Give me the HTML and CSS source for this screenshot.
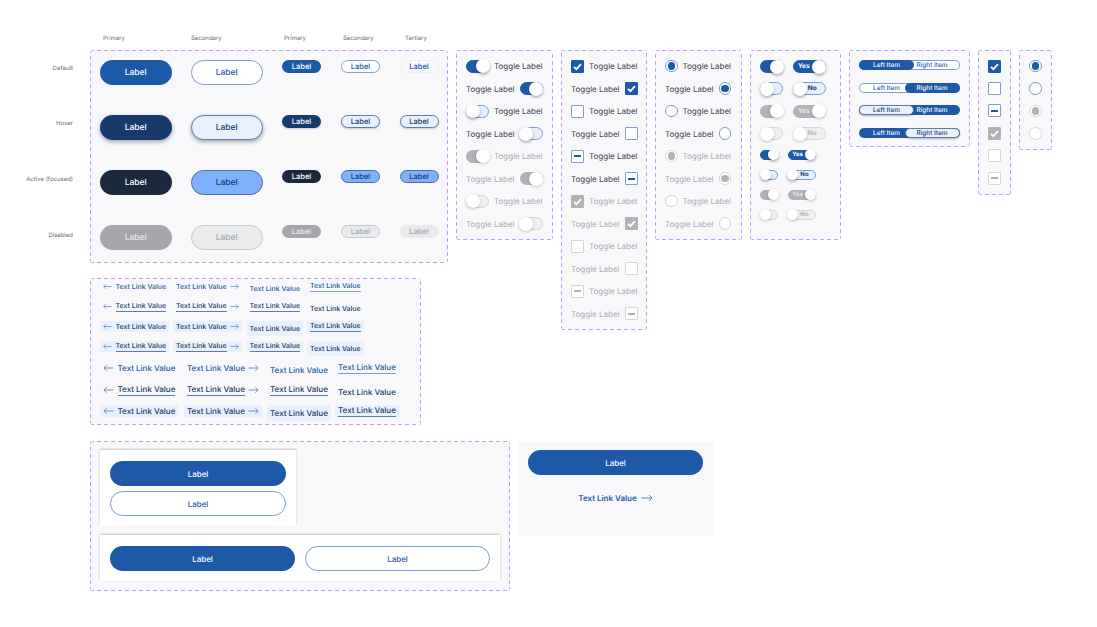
FILE: index.html
```html
<!DOCTYPE html>
<html lang="en">

<head>
    <meta charset="UTF-8" />
    <title>Buttons and Controls</title>
    <link rel="stylesheet" href="styles.css">
</head>

<body>
    <svg class="defs" width="0" height="0">
        <symbol id="check" viewBox="0 0 13 13">
            <path d="M3 6.8 5.4 9.2 10 4.2" fill="none" stroke="currentColor" stroke-width="1.7" />
        </symbol>
        <symbol id="arrow-right" viewBox="0 0 12 8">
            <path d="M0.5 4H11M8 1l3 3-3 3" fill="none" stroke="currentColor" stroke-width="0.9" />
        </symbol>
        <symbol id="arrow-left" viewBox="0 0 12 8">
            <path d="M11.5 4H1M4 1 1 4l3 3" fill="none" stroke="currentColor" stroke-width="0.9" />
        </symbol>
    </svg>

    <div class="col-heads">
        <span class="col-head w-88">Primary</span>
        <span class="col-head w-93">Secondary</span>
        <span class="col-head w-59">Primary</span>
        <span class="col-head w-62">Secondary</span>
        <span class="col-head">Tertiary</span>
    </div>

    <div class="upper">
        <div class="states">
            <span class="state">Default</span>
            <span class="state">Hover</span>
            <span class="state">Active (focused)</span>
            <span class="state">Disabled</span>
        </div>

        <div class="left-stack">
            <!-- Buttons -->
            <section class="panel matrix">
                <a class="btn big primary">Label</a>
                <a class="btn big secondary">Label</a>
                <a class="btn small primary">Label</a>
                <a class="btn small secondary">Label</a>
                <a class="btn small tertiary">Label</a>

                <a class="btn big primary hover">Label</a>
                <a class="btn big secondary hover">Label</a>
                <a class="btn small primary hover-flat">Label</a>
                <a class="btn small secondary hover-flat">Label</a>
                <a class="btn small tertiary hover-flat">Label</a>

                <a class="btn big primary active">Label</a>
                <a class="btn big secondary active">Label</a>
                <a class="btn small primary active">Label</a>
                <a class="btn small secondary active">Label</a>
                <a class="btn small tertiary active">Label</a>

                <a class="btn big primary disabled">Label</a>
                <a class="btn big secondary disabled">Label</a>
                <a class="btn small primary disabled">Label</a>
                <a class="btn small secondary disabled">Label</a>
                <a class="btn small tertiary disabled">Label</a>
            </section>

            <!-- Text links -->
            <section class="panel links">
                <div class="link-grid small-links">
                    <a class="link"><svg class="arrow"><use href="#arrow-left" /></svg><span>Text Link Value</span></a>
                    <a class="link"><span>Text Link Value</span><svg class="arrow"><use href="#arrow-right" /></svg></a>
                    <a class="link plain"><span>Text Link Value</span></a>
                    <a class="link"><span class="line">Text Link Value</span></a>

                    <a class="link dark"><svg class="arrow"><use href="#arrow-left" /></svg><span class="line">Text Link Value</span></a>
                    <a class="link dark"><span class="line">Text Link Value</span><svg class="arrow"><use href="#arrow-right" /></svg></a>
                    <a class="link dark"><span class="line">Text Link Value</span></a>
                    <a class="link dark plain"><span>Text Link Value</span></a>

                    <a class="link dark tint"><svg class="arrow"><use href="#arrow-left" /></svg><span>Text Link Value</span></a>
                    <a class="link dark tint"><span>Text Link Value</span><svg class="arrow"><use href="#arrow-right" /></svg></a>
                    <a class="link dark tint plain"><span>Text Link Value</span></a>
                    <a class="link dark tint"><span class="line">Text Link Value</span></a>

                    <a class="link dark tint"><svg class="arrow"><use href="#arrow-left" /></svg><span class="line">Text Link Value</span></a>
                    <a class="link dark tint"><span class="line">Text Link Value</span><svg class="arrow"><use href="#arrow-right" /></svg></a>
                    <a class="link dark tint"><span class="line">Text Link Value</span></a>
                    <a class="link dark tint plain"><span>Text Link Value</span></a>
                </div>
                <div class="link-grid big-links">
                    <a class="link"><svg class="arrow"><use href="#arrow-left" /></svg><span>Text Link Value</span></a>
                    <a class="link"><span>Text Link Value</span><svg class="arrow"><use href="#arrow-right" /></svg></a>
                    <a class="link plain"><span>Text Link Value</span></a>
                    <a class="link"><span class="line">Text Link Value</span></a>

                    <a class="link dark"><svg class="arrow"><use href="#arrow-left" /></svg><span class="line">Text Link Value</span></a>
                    <a class="link dark"><span class="line">Text Link Value</span><svg class="arrow"><use href="#arrow-right" /></svg></a>
                    <a class="link dark"><span class="line">Text Link Value</span></a>
                    <a class="link dark plain"><span>Text Link Value</span></a>

                    <a class="link dark tint"><svg class="arrow"><use href="#arrow-left" /></svg><span>Text Link Value</span></a>
                    <a class="link dark tint"><span>Text Link Value</span><svg class="arrow"><use href="#arrow-right" /></svg></a>
                    <a class="link dark tint plain"><span>Text Link Value</span></a>
                    <a class="link dark tint"><span class="line">Text Link Value</span></a>
                </div>
            </section>
        </div>

        <!-- Toggles with labels -->
        <section class="panel list w-97">
            <div class="row"><span class="switch on"><i class="knob"></i></span><span class="text">Toggle Label</span></div>
            <div class="row"><span class="text">Toggle Label</span><span class="switch on"><i class="knob"></i></span></div>
            <div class="row"><span class="switch off"><i class="knob"></i></span><span class="text">Toggle Label</span></div>
            <div class="row"><span class="text">Toggle Label</span><span class="switch off"><i class="knob"></i></span></div>
            <div class="row muted"><span class="switch on"><i class="knob"></i></span><span class="text">Toggle Label</span></div>
            <div class="row muted"><span class="text">Toggle Label</span><span class="switch on"><i class="knob"></i></span></div>
            <div class="row muted"><span class="switch off"><i class="knob"></i></span><span class="text">Toggle Label</span></div>
            <div class="row muted"><span class="text">Toggle Label</span><span class="switch off"><i class="knob"></i></span></div>
        </section>

        <!-- Checkboxes with labels -->
        <section class="panel list w-86 tall">
            <div class="row"><span class="box filled"><svg><use href="#check" /></svg></span><span class="text">Toggle Label</span></div>
            <div class="row"><span class="text">Toggle Label</span><span class="box filled"><svg><use href="#check" /></svg></span></div>
            <div class="row"><span class="box"></span><span class="text">Toggle Label</span></div>
            <div class="row"><span class="text">Toggle Label</span><span class="box"></span></div>
            <div class="row"><span class="box"><i class="dash"></i></span><span class="text">Toggle Label</span></div>
            <div class="row"><span class="text">Toggle Label</span><span class="box"><i class="dash"></i></span></div>
            <div class="row muted"><span class="box filled"><svg><use href="#check" /></svg></span><span class="text">Toggle Label</span></div>
            <div class="row muted"><span class="text">Toggle Label</span><span class="box filled"><svg><use href="#check" /></svg></span></div>
            <div class="row muted"><span class="box"></span><span class="text">Toggle Label</span></div>
            <div class="row muted"><span class="text">Toggle Label</span><span class="box"></span></div>
            <div class="row muted"><span class="box"><i class="dash"></i></span><span class="text">Toggle Label</span></div>
            <div class="row muted"><span class="text">Toggle Label</span><span class="box"><i class="dash"></i></span></div>
        </section>

        <!-- Radios with labels -->
        <section class="panel list w-87">
            <div class="row"><span class="radio"><i class="dot"></i></span><span class="text">Toggle Label</span></div>
            <div class="row"><span class="text">Toggle Label</span><span class="radio"><i class="dot"></i></span></div>
            <div class="row"><span class="radio"></span><span class="text">Toggle Label</span></div>
            <div class="row"><span class="text">Toggle Label</span><span class="radio"></span></div>
            <div class="row muted"><span class="radio"><i class="dot"></i></span><span class="text">Toggle Label</span></div>
            <div class="row muted"><span class="text">Toggle Label</span><span class="radio"><i class="dot"></i></span></div>
            <div class="row muted"><span class="radio"></span><span class="text">Toggle Label</span></div>
            <div class="row muted"><span class="text">Toggle Label</span><span class="radio"></span></div>
        </section>

        <!-- Bare toggles -->
        <section class="panel bare-toggles">
            <div class="toggle-pair"><span class="switch on"><i class="knob"></i></span><span class="switch wide on"><b>Yes</b><i class="knob"></i></span></div>
            <div class="toggle-pair"><span class="switch off"><i class="knob"></i></span><span class="switch wide off"><i class="knob"></i><b>No</b></span></div>
            <div class="toggle-pair muted"><span class="switch on"><i class="knob"></i></span><span class="switch wide on"><b>Yes</b><i class="knob"></i></span></div>
            <div class="toggle-pair muted"><span class="switch off"><i class="knob"></i></span><span class="switch wide off"><i class="knob"></i><b>No</b></span></div>
            <div class="toggle-pair mini"><span class="switch on"><i class="knob"></i></span><span class="switch wide on"><b>Yes</b><i class="knob"></i></span></div>
            <div class="toggle-pair mini"><span class="switch off"><i class="knob"></i></span><span class="switch wide off"><i class="knob"></i><b>No</b></span></div>
            <div class="toggle-pair mini muted"><span class="switch on"><i class="knob"></i></span><span class="switch wide on"><b>Yes</b><i class="knob"></i></span></div>
            <div class="toggle-pair mini muted"><span class="switch off"><i class="knob"></i></span><span class="switch wide off"><i class="knob"></i><b>No</b></span></div>
        </section>

        <!-- Segmented -->
        <section class="panel segments">
            <div class="segment"><span class="seg-item picked">Left Item</span><span class="seg-item">Right Item</span></div>
            <div class="segment"><span class="seg-item">Left Item</span><span class="seg-item picked">Right Item</span></div>
            <div class="segment solid"><span class="seg-item pale">Left Item</span><span class="seg-item">Right Item</span></div>
            <div class="segment solid"><span class="seg-item">Left Item</span><span class="seg-item pale">Right Item</span></div>
        </section>

        <!-- Bare checkboxes -->
        <section class="panel bare h-145">
            <div class="bare-row"><span class="box filled"><svg><use href="#check" /></svg></span></div>
            <div class="bare-row"><span class="box"></span></div>
            <div class="bare-row"><span class="box"><i class="dash"></i></span></div>
            <div class="bare-row muted"><span class="box filled"><svg><use href="#check" /></svg></span></div>
            <div class="bare-row muted"><span class="box"></span></div>
            <div class="bare-row muted"><span class="box"><i class="dash"></i></span></div>
        </section>

        <!-- Bare radios -->
        <section class="panel bare h-100">
            <div class="bare-row"><span class="radio"><i class="dot"></i></span></div>
            <div class="bare-row"><span class="radio"></span></div>
            <div class="bare-row muted"><span class="radio"><i class="dot"></i></span></div>
            <div class="bare-row muted"><span class="radio"></span></div>
        </section>
    </div>

    <div class="lower">
        <section class="panel button-groups">
            <div class="card stacked">
                <a class="btn wide-btn primary">Label</a>
                <a class="btn wide-btn secondary">Label</a>
            </div>
            <div class="card side">
                <a class="btn wide-btn primary">Label</a>
                <a class="btn wide-btn secondary">Label</a>
            </div>
        </section>

        <section class="cta">
            <a class="btn wide-btn primary">Label</a>
            <a class="cta-link"><span>Text Link Value</span><svg class="arrow"><use href="#arrow-right" /></svg></a>
        </section>
    </div>
</body>

</html>
```

FILE: styles.css
```css
* {
    box-sizing: border-box;
}

body {
    margin: 0;
    width: 1097px;
    height: 627px;
    overflow: hidden;
    background-color: #fff;
    font-family: Inter, "Liberation Sans", sans-serif;
    text-rendering: geometricPrecision;
    color: #2c3440;
}

.defs {
    position: absolute;
}

.col-heads {
    display: flex;
    height: 18px;
    padding: 3px 0 0 103px;
    margin-top: 32px;
    font-size: 6px;
    line-height: 8px;
    color: #666b73;
}

.w-88 { width: 88px; }
.w-93 { width: 93px; }
.w-59 { width: 59px; }
.w-62 { width: 62px; }

.upper {
    display: flex;
    align-items: flex-start;
    gap: 8px;
    height: 375px;
}

.states {
    display: flex;
    flex-direction: column;
    width: 73px;
    margin-right: 9px;
    padding-top: 14.5px;
    text-align: right;
    font-size: 6px;
    line-height: 8px;
    color: #666b73;
    white-space: nowrap;
}

.state {
    height: 55.7px;
}

.left-stack {
    display: flex;
    flex-direction: column;
    gap: 15px;
    width: 358px;
}

/* longer dashes than a dashed border gives */
.panel {
    border: 1px solid transparent;
    border-radius: 3px;
    background:
        repeating-linear-gradient(90deg, #c69cfb 0 4px, transparent 4px 7px) top / 100% 1px no-repeat border-box,
        repeating-linear-gradient(90deg, #c69cfb 0 4px, transparent 4px 7px) bottom / 100% 1px no-repeat border-box,
        repeating-linear-gradient(0deg, #c69cfb 0 4px, transparent 4px 7px) left / 1px 100% no-repeat border-box,
        repeating-linear-gradient(0deg, #c69cfb 0 4px, transparent 4px 7px) right / 1px 100% no-repeat border-box,
        #f8f8fa;
}

/* Buttons */
.matrix {
    display: grid;
    grid-template-columns: 91px 91px 59px 58.5px 39px;
    grid-auto-rows: 25px;
    row-gap: 30px;
    height: 213px;
    padding: 9px;
}

.btn {
    display: flex;
    align-items: center;
    justify-content: center;
    border: 1px solid transparent;
    border-radius: 13px;
    font-weight: 500;
}

.big {
    width: 71.5px;
    height: 25px;
    font-size: 8.5px;
}

.small {
    width: 39px;
    height: 13px;
    font-size: 7.5px;
    border-radius: 7px;
}

.wide-btn {
    height: 25px;
    font-size: 8px;
}

.primary {
    background-color: #1e59a8;
    color: #fff;
}

.primary.hover,
.primary.hover-flat {
    background-color: #173a6b;
}

.primary.active {
    background-color: #1a2a3c;
}

.primary.disabled {
    background-color: #a5a7aa;
    color: #e8e9ea;
}

.secondary {
    background-color: #fff;
    border-color: #7c9fd3;
    color: #1e59a8;
}

.secondary.hover,
.secondary.hover-flat,
.tertiary.hover-flat {
    background-color: #e8f0fb;
    border-color: #5e7cab;
    color: #173a6b;
}

.secondary.active,
.tertiary.active {
    background-color: #7fb0fb;
    border-color: #4e6c9e;
    color: #173a6b;
}

.secondary.disabled {
    background-color: #e8eaec;
    border-color: #c6c9cc;
    color: #a5a9ad;
}

.tertiary {
    border-color: #eeeff3;
    color: #1e59a8;
}

.tertiary.disabled {
    background-color: #e8eaec;
    border-color: #e8eaec;
    color: #a5a9ad;
}

.hover {
    box-shadow: 0 2px 4px rgba(30, 40, 60, 0.4);
}

.hover-flat {
    box-shadow: 0 1px 2px rgba(30, 40, 60, 0.25);
}

/* Text links */
.links {
    width: 331px;
    height: 147px;
    padding: 2px 9px 0;
}

.link-grid {
    display: grid;
    align-items: start;
    justify-items: start;
}

.small-links {
    grid-template-columns: 73px 73.5px 60.5px 60px;
    grid-auto-rows: 20px;
    font-size: 7px;
}

.big-links {
    grid-template-columns: 84px 83px 68px 68px;
    grid-auto-rows: 21.5px;
    margin-top: 1px;
    font-size: 8px;
}

.link {
    display: flex;
    align-items: center;
    gap: 3.5px;
    padding: 0 3px;
    height: 11px;
    font-weight: 500;
    line-height: 10px;
    white-space: nowrap;
    color: #1e59a8;
}

.big-links .link {
    height: 12px;
    line-height: 11px;
}

.link.plain {
    height: 15px;
    padding-top: 1px;
}

.big-links .link.plain {
    height: 16px;
}

.link .line {
    border-bottom: 1px solid #7c9fd3;
}

.link.dark {
    color: #173a6b;
}

.link.dark .line {
    border-bottom-color: #5e7cab;
}

.link.tint {
    background-color: #e8f0fb;
}

.arrow {
    display: block;
    flex: none;
    width: 9px;
    height: 7px;
    color: #4e7dbd;
}

.big-links .arrow {
    width: 11px;
    height: 8px;
}

/* Labelled lists */
.list {
    display: flex;
    flex-direction: column;
    height: 190px;
    padding: 3.75px 9px;
}

.tall {
    height: 280px;
}

.w-97 { width: 97px; }
.w-86 { width: 86px; }
.w-87 { width: 87px; }

.row {
    display: flex;
    align-items: center;
    gap: 5px;
    flex: none;
    height: 22.5px;
    font-size: 8px;
    color: #3b4250;
    white-space: nowrap;
}

.row.muted,
.bare-row.muted {
    color: #a9adb3;
}

.switch {
    display: flex;
    align-items: center;
    flex: none;
    width: 23px;
    height: 13px;
    border: 1px solid #1e59a8;
    border-radius: 7px;
    background-color: #1e59a8;
    font-style: normal;
}

.switch.on {
    justify-content: flex-end;
}

.switch.off {
    background-color: #e8f0fb;
    border-color: #7c9fd3;
}

.knob {
    flex: none;
    width: 14px;
    height: 14px;
    margin: 0 -1.5px;
    border-radius: 50%;
    background-color: #fff;
    box-shadow: 0 1.5px 3px rgba(30, 40, 60, 0.4);
}

.muted .switch {
    background-color: #b0b2b5;
    border-color: #b0b2b5;
}

.muted .switch.off {
    background-color: #eeeff0;
    border-color: #d4d6d9;
}

.muted .knob {
    box-shadow: 0 1px 3px rgba(30, 40, 60, 0.25);
}

.box {
    display: flex;
    align-items: center;
    justify-content: center;
    flex: none;
    width: 13px;
    height: 13px;
    background-color: #fff;
    border: 1px solid #7c9fd3;
    border-radius: 1px;
}

.box.filled {
    background-color: #1e59a8;
    border-color: #1e59a8;
    color: #fff;
}

.box svg {
    display: block;
    flex: none;
    width: 13px;
    height: 13px;
}

.dash {
    display: block;
    width: 7px;
    height: 2px;
    background-color: #1e59a8;
}

.muted .box {
    border-color: #d4d6d9;
}

.muted .box.filled {
    background-color: #b0b2b5;
    border-color: #b0b2b5;
}

.muted .dash {
    background-color: #b0b2b5;
}

.radio {
    display: flex;
    align-items: center;
    justify-content: center;
    flex: none;
    width: 12.5px;
    height: 12.5px;
    background-color: #fff;
    border: 1px solid #7c9fd3;
    border-radius: 50%;
}

.dot {
    display: block;
    width: 7.5px;
    height: 7.5px;
    border-radius: 50%;
    background-color: #1e59a8;
}

.muted .radio {
    border-color: #d4d6d9;
}

.muted .dot {
    background-color: #b0b2b5;
}

/* Toggles without labels */
.bare-toggles {
    display: flex;
    flex-direction: column;
    width: 91px;
    height: 190px;
    padding: 4.5px 9px;
}

.toggle-pair {
    display: flex;
    align-items: center;
    gap: 10px;
    flex: none;
    height: 22.33px;
}

.toggle-pair.mini {
    gap: 9.5px;
    height: 20px;
}

.switch.wide {
    justify-content: space-between;
    width: 32.5px;
}

.switch.wide b {
    flex: 1;
    text-align: center;
    font-size: 6.5px;
    line-height: 9px;
    font-weight: 700;
    color: #fff;
}

.switch.wide.off b {
    padding-right: 5px;
    color: #173a6b;
}

.muted .switch.wide b {
    color: #e8e9ea;
}

.muted .switch.wide.off b {
    color: #b3b6ba;
}

.mini .switch {
    width: 18px;
    height: 10px;
}

.mini .switch.wide {
    width: 28px;
}

.mini .knob {
    width: 11px;
    height: 11px;
}

.mini .switch.wide b {
    font-size: 6px;
}

.mini .switch.wide.off b {
    padding-right: 2px;
}

/* Segmented */
.segments {
    display: flex;
    flex-direction: column;
    gap: 12.5px;
    width: 121px;
    height: 97px;
    padding: 9px;
}

.segment {
    display: flex;
    width: 100.5px;
    height: 10px;
    background-color: #fff;
    box-shadow: inset 0 0 0 1px #7c9fd3;
    border-radius: 5px;
    font-size: 6.4px;
    font-weight: 500;
    color: #1e59a8;
}

.segment.solid {
    background-color: #1e59a8;
    box-shadow: none;
    color: #fff;
}

.seg-item {
    position: relative;
    display: flex;
    align-items: center;
    justify-content: center;
    flex: none;
    width: 55px;
    height: 10px;
    border-radius: 5px;
    white-space: nowrap;
}

.seg-item + .seg-item {
    margin-left: -9.5px;
}

.seg-item.picked {
    background-color: #1e59a8;
    color: #fff;
}

.seg-item.pale {
    background-color: #e8f0fb;
    border: 1px solid #5e7cab;
    color: #173a6b;
    box-shadow: 0 1px 2px rgba(30, 40, 60, 0.35);
}

/* Bare boxes and radios */
.bare {
    display: flex;
    flex-direction: column;
    width: 33px;
    padding: 4px 9px;
}

.h-145 { height: 145px; }
.h-100 { height: 100px; }

.bare-row {
    display: flex;
    align-items: center;
    flex: none;
    height: 22.4px;
}

/* Button groups */
.lower {
    display: flex;
    gap: 8px;
    margin: 16px 0 0 90px;
}

.button-groups {
    display: flex;
    flex-direction: column;
    gap: 9px;
    width: 420px;
    height: 150px;
    padding: 8px 9px;
}

.card {
    padding: 11px 10px 10px;
    background-color: #fff;
    box-shadow: 0 -1px 2px rgba(0, 0, 0, 0.22);
}

.stacked {
    display: flex;
    flex-direction: column;
    gap: 5px;
    width: 196px;
    height: 76px;
}

.side {
    display: flex;
    gap: 10px;
    width: 400px;
    height: 46px;
}

.side .btn {
    width: 185px;
}

.cta {
    display: flex;
    flex-direction: column;
    width: 195px;
    height: 95px;
    padding: 9px 10px;
    background-color: #f8f8fa;
}

.cta-link {
    display: flex;
    align-items: center;
    justify-content: center;
    gap: 4px;
    margin-top: 18px;
    height: 10px;
    font-size: 8px;
    font-weight: 600;
    color: #1e59a8;
}

.cta-link .arrow {
    width: 12px;
    height: 8px;
}
```
